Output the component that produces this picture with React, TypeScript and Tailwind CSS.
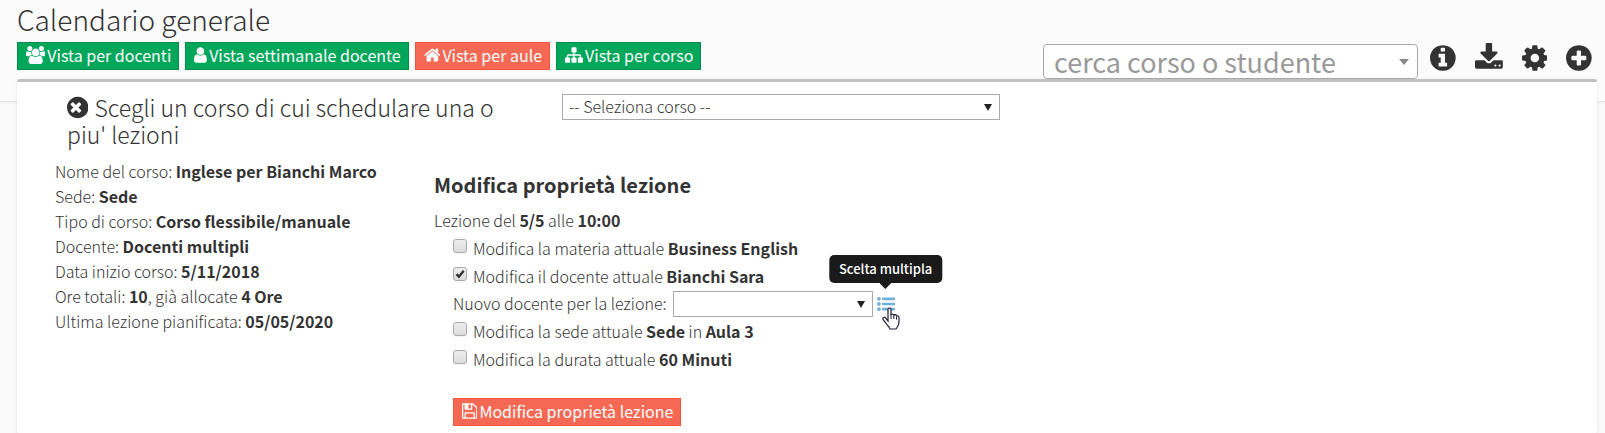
import { useState } from "react"
import type { ReactNode, SelectHTMLAttributes } from "react"
import clsx from "clsx"

const icons = {
  users: {
    box: "0 0 1920 1792",
    d: "M593 896q-162 5-265 128h-134q-82 0-138-40.5t-56-118.5q0-353 124-353 6 0 43.5 21t97.5 42.5 119 21.5q67 0 133-23-5 37-5 66 0 139 81 256zm1071 637q0 120-73 189.5t-194 69.5h-874q-121 0-194-69.5t-73-189.5q0-53 3.5-103.5t14-109 26.5-108.5 43-97.5 62-81 85.5-53.5 111.5-20q10 0 43 21.5t73 48 107 48 135 21.5 135-21.5 107-48 73-48 43-21.5q61 0 111.5 20t85.5 53.5 62 81 43 97.5 26.5 108.5 14 109 3.5 103.5zm-1024-1277q0 106-75 181t-181 75-181-75-75-181 75-181 181-75 181 75 75 181zm704 384q0 159-112.5 271.5t-271.5 112.5-271.5-112.5-112.5-271.5 112.5-271.5 271.5-112.5 271.5 112.5 112.5 271.5zm576 225q0 78-56 118.5t-138 40.5h-134q-103-123-265-128 81-117 81-256 0-29-5-66 66 23 133 23 59 0 119-21.5t97.5-42.5 43.5-21q124 0 124 353zm-128-609q0 106-75 181t-181 75-181-75-75-181 75-181 181-75 181 75 75 181z",
  },
  user: {
    box: "256 0 1280 1792",
    d: "M1536 1399q0 109-62.5 187t-150.5 78h-854q-88 0-150.5-78t-62.5-187q0-85 8.5-160.5t31.5-152 58.5-131 94-89 134.5-34.5q131 128 313 128t313-128q76 0 134.5 34.5t94 89 58.5 131 31.5 152 8.5 160.5zm-256-887q0 159-112.5 271.5t-271.5 112.5-271.5-112.5-112.5-271.5 112.5-271.5 271.5-112.5 271.5 112.5 112.5 271.5z",
  },
  home: {
    box: "64 0 1664 1792",
    d: "M1472 992v480q0 26-19 45t-45 19h-384v-384h-256v384h-384q-26 0-45-19t-19-45v-480q0-1 .5-3t.5-3l575-474 575 474q1 2 1 6zm223-69l-62 74q-8 9-21 11h-3q-13 0-21-7l-692-577-692 577q-12 8-24 7-13-2-21-11l-62-74q-8-10-7-23.5t11-21.5l719-599q32-26 76-26t76 26l244 204v-195q0-14 9-23t23-9h192q14 0 23 9t9 23v408l219 182q10 8 11 21.5t-7 23.5z",
  },
  sitemap: {
    box: "0 0 1792 1792",
    d: "M1792 1248v320q0 40-28 68t-68 28h-320q-40 0-68-28t-28-68v-320q0-40 28-68t68-28h96v-192h-512v192h96q40 0 68 28t28 68v320q0 40-28 68t-68 28h-320q-40 0-68-28t-28-68v-320q0-40 28-68t68-28h96v-192h-512v192h96q40 0 68 28t28 68v320q0 40-28 68t-68 28h-320q-40 0-68-28t-28-68v-320q0-40 28-68t68-28h96v-192q0-52 38-90t90-38h512v-192h-96q-40 0-68-28t-28-68v-320q0-40 28-68t68-28h320q40 0 68 28t28 68v320q0 40-28 68t-68 28h-96v192h512q52 0 90 38t38 90v192h96q40 0 68 28t28 68z",
  },
  save: {
    box: "128 0 1536 1792",
    d: "M512 1536h768v-384h-768v384zm896 0h128v-896q0-14-10-38.5t-20-34.5l-281-281q-10-10-34-20t-39-10v416q0 40-28 68t-68 28h-576q-40 0-68-28t-28-68v-416h-128v1280h128v-416q0-40 28-68t68-28h832q40 0 68 28t28 68v416zm-384-928v-320q0-13-9.5-22.5t-22.5-9.5h-192q-13 0-22.5 9.5t-9.5 22.5v320q0 13 9.5 22.5t22.5 9.5h192q13 0 22.5-9.5t9.5-22.5zm640 32v928q0 40-28 68t-68 28h-1344q-40 0-68-28t-28-68v-1344q0-40 28-68t68-28h928q40 0 88 20t76 48l280 280q28 28 48 76t20 88z",
  },
  close: {
    box: "128 0 1536 1792",
    d: "M1149 1122q0-26-19-45l-181-181 181-181q19-19 19-45 0-27-19-46l-90-90q-19-19-46-19-26 0-45 19l-181 181-181-181q-19-19-45-19-27 0-46 19l-90 90q-19 19-19 46 0 26 19 45l181 181-181 181q-19 19-19 45 0 27 19 46l90 90q19 19 46 19 26 0 45-19l181-181 181 181q19 19 45 19 27 0 46-19l90-90q19-19 19-46zm515-226q0 209-103 385.5t-279.5 279.5-385.5 103-385.5-103-279.5-279.5-103-385.5 103-385.5 279.5-279.5 385.5-103 385.5 103 279.5 279.5 103 385.5z",
  },
  info: {
    box: "128 0 1536 1792",
    d: "M1152 1376v-160q0-14-9-23t-23-9h-96v-512q0-14-9-23t-23-9h-320q-14 0-23 9t-9 23v160q0 14 9 23t23 9h96v320h-96q-14 0-23 9t-9 23v160q0 14 9 23t23 9h448q14 0 23-9t9-23zm-128-896v-160q0-14-9-23t-23-9h-192q-14 0-23 9t-9 23v160q0 14 9 23t23 9h192q14 0 23-9t9-23zm640 416q0 209-103 385.5t-279.5 279.5-385.5 103-385.5-103-279.5-279.5-103-385.5 103-385.5 279.5-279.5 385.5-103 385.5 103 279.5 279.5 103 385.5z",
  },
  download: {
    box: "64 0 1664 1792",
    d: "M1344 1344q0-26-19-45t-45-19-45 19-19 45 19 45 45 19 45-19 19-45zm256 0q0-26-19-45t-45-19-45 19-19 45 19 45 45 19 45-19 19-45zm128-224v320q0 40-28 68t-68 28h-1472q-40 0-68-28t-28-68v-320q0-40 28-68t68-28h465l135 136q58 56 136 56t136-56l136-136h464q40 0 68 28t28 68zm-325-569q17 41-14 70l-448 448q-18 19-45 19t-45-19l-448-448q-31-29-14-70 17-39 59-39h256v-448q0-26 19-45t45-19h256q26 0 45 19t19 45v448h256q42 0 59 39z",
  },
  cog: {
    box: "128 0 1536 1792",
    d: "M1152 896q0-106-75-181t-181-75-181 75-75 181 75 181 181 75 181-75 75-181zm512-109v222q0 12-8 23t-20 13l-185 28q-19 54-39 91 35 50 107 138 10 12 10 25t-9 23q-27 37-99 108t-94 71q-12 0-26-9l-138-108q-44 23-91 38-16 136-29 186-7 28-36 28h-222q-14 0-24.5-8.5t-11.5-21.5l-28-184q-49-16-90-37l-141 107q-10 9-25 9-14 0-25-11-126-114-165-168-7-10-7-23 0-12 8-23 15-21 51-66.5t54-70.5q-27-50-41-99l-183-27q-13-2-21-12.5t-8-23.5v-222q0-12 8-23t19-13l186-28q14-46 39-92-40-57-107-138-10-12-10-24 0-10 9-23 26-36 98.5-107.5t94.5-71.5q13 0 26 10l138 107q44-23 91-38 16-136 29-186 7-28 36-28h222q14 0 24.5 8.5t11.5 21.5l28 184q49 16 90 37l142-107q9-9 24-9 13 0 25 10 129 119 165 170 7 8 7 22 0 12-8 23-15 21-51 66.5t-54 70.5q26 50 41 98l183 28q13 2 21 12.5t8 23.5z",
  },
  plus: {
    box: "128 0 1536 1792",
    d: "M1344 960v-128q0-26-19-45t-45-19h-256v-256q0-26-19-45t-45-19h-128q-26 0-45 19t-19 45v256h-256q-26 0-45 19t-19 45v128q0 26 19 45t45 19h256v256q0 26 19 45t45 19h128q26 0 45-19t19-45v-256h256q26 0 45-19t19-45zm320-64q0 209-103 385.5t-279.5 279.5-385.5 103-385.5-103-279.5-279.5-103-385.5 103-385.5 279.5-279.5 385.5-103 385.5 103 279.5 279.5 103 385.5z",
  },
  list: {
    box: "0 0 1792 1792",
    d: "M384 1408a192 192 0 1 1-384 0 192 192 0 1 1 384 0zm0-512a192 192 0 1 1-384 0 192 192 0 1 1 384 0zm0-512a192 192 0 1 1-384 0 192 192 0 1 1 384 0zm1408 928v192q0 32-32 32h-1216q-32 0-32-32v-192q0-32 32-32h1216q32 0 32 32zm0-512v192q0 32-32 32h-1216q-32 0-32-32v-192q0-32 32-32h1216q32 0 32 32zm0-512v192q0 32-32 32h-1216q-32 0-32-32v-192q0-32 32-32h1216q32 0 32 32z",
  },
}

type IconName = keyof typeof icons

function Icon({ name, className }: { name: IconName; className?: string }) {
  return (
    <svg viewBox={icons[name].box} fill="currentColor" className={clsx("w-auto shrink-0", className)} aria-hidden="true">
      <path d={icons[name].d} />
    </svg>
  )
}

function ActionButton({ icon, color = "green", children }: { icon: IconName; color?: "green" | "red"; children: ReactNode }) {
  return (
    <button
      className={clsx(
        "flex h-7 items-center gap-[2px] border pr-[7px] pb-[2px] pl-2 text-[16px] leading-6 font-normal whitespace-nowrap text-white",
        color === "green" ? "border-[#008d4c] bg-[#00a65a]" : "border-[#f4543c] bg-[#f56954]"
      )}
    >
      <Icon name={icon} className="h-[18px]" />
      {children}
    </button>
  )
}

function PlainSelect({ className, children, ...props }: SelectHTMLAttributes<HTMLSelectElement>) {
  return (
    <div className={clsx("relative", className)}>
      <select
        {...props}
        className="block h-[26px] w-full appearance-none border border-[#a9a9a9] bg-white px-1.5 pb-[2px] text-[16px] leading-5 font-light text-[#333]"
      >
        {children}
      </select>
      <svg viewBox="0 0 8 7" className="pointer-events-none absolute top-[10px] right-2 h-[7px] w-2 fill-[#222]">
        <path d="M0 0h8L4 7z" />
      </svg>
    </div>
  )
}

function CheckRow({ checked = false, children }: { checked?: boolean; children: ReactNode }) {
  const [on, setOn] = useState(checked)
  return (
    <label className="flex h-7 items-center gap-1.5">
      <span className="relative mb-[5px] block h-[14px] w-[14px]">
        <input
          type="checkbox"
          checked={on}
          onChange={() => setOn(!on)}
          className="block h-[14px] w-[14px] appearance-none rounded-[3px] border border-[#aaa] bg-linear-to-b from-[#eee] to-[#dcdcdc] shadow-xs"
        />
        {on && (
          <svg viewBox="0 0 14 14" className="pointer-events-none absolute inset-0 h-[14px] w-[14px]">
            <path d="M3.500 7.200l2.400 2.500 4.800-6" fill="none" stroke="#333" strokeWidth="2.400" />
          </svg>
        )}
      </span>
      <span>{children}</span>
    </label>
  )
}

const details: [string, string][] = [
  ["Nome del corso", "Inglese per Bianchi Marco"],
  ["Sede", "Sede"],
  ["Tipo di corso", "Corso flessibile/manuale"],
  ["Docente", "Docenti multipli"],
  ["Data inizio corso", "5/11/2018"],
]

const tools: { icon: IconName; label: string }[] = [
  { icon: "info", label: "Informazioni" },
  { icon: "download", label: "Scarica" },
  { icon: "cog", label: "Impostazioni" },
  { icon: "plus", label: "Aggiungi" },
]

export default function App() {
  return (
    <div className="min-h-screen bg-[#f9f9f9] font-['Noto_Sans_CJK_SC','Source_Sans_Pro',sans-serif] text-[16px] leading-[25px] font-light text-[#333] [&_b]:font-bold">
      <header className="flex items-end justify-between border-b border-[#e4e4e4] bg-[#fbfbfb] pr-[13px] pb-[22px] pl-[17px] shadow-xs">
        <div className="pb-[9px]">
          <h1 className="pt-[2px] pb-1.5 text-[28px] leading-[34px]">Calendario generale</h1>
          <div className="flex gap-1.5">
            <ActionButton icon="users">Vista per docenti</ActionButton>
            <ActionButton icon="user">Vista settimanale docente</ActionButton>
            <ActionButton icon="home" color="red">Vista per aule</ActionButton>
            <ActionButton icon="sitemap">Vista per corso</ActionButton>
          </div>
        </div>
        <div className="flex items-end gap-3">
          <div className="relative w-[375px]">
            <select
              aria-label="cerca corso o studente"
              className="block h-[35px] w-full appearance-none rounded-[4px] border border-[#aaa] bg-white px-2.5 text-[27px] leading-8 font-normal text-[#999]"
            >
              <option>cerca corso o studente</option>
            </select>
            <svg viewBox="0 0 10 6" className="pointer-events-none absolute top-[15px] right-[9px] h-[6px] w-[10px] fill-[#888]">
              <path d="M0 0h10L5 6z" />
            </svg>
          </div>
          <div className="flex items-center gap-[19px] pb-[6px]">
            {tools.map((tool) => (
              <button key={tool.icon} aria-label={tool.label}>
                <Icon name={tool.icon} className="h-[30px]" />
              </button>
            ))}
          </div>
        </div>
      </header>

      <main className="relative mr-2 -mt-[23px] ml-[17px] min-h-[354px] rounded-[3px] border-t-[3px] border-[#c1c1c1] bg-white pb-2 shadow-sm">
        <div className="flex items-start pt-3 pl-[50px]">
          <h2 className="w-[445px] text-[23px] leading-[27px]">
            <button className="mr-1.5 inline-block align-[-3px]" aria-label="Chiudi">
              <Icon name="close" className="h-[25px]" />
            </button>
            Scegli un corso di cui schedulare una o piu' lezioni
          </h2>
          <PlainSelect className="ml-[50px] w-[438px]" aria-label="Corso">
            <option>-- Seleziona corso --</option>
          </PlainSelect>
        </div>

        <div className="flex items-start pt-[3px] pl-[38px]">
          <section className="w-[379px] pt-2">
            {details.map(([label, value]) => (
              <p key={label}>
                {label}: <b>{value}</b>
              </p>
            ))}
            <p>
              Ore totali: <b>10</b>, già allocate <b>4 Ore</b>
            </p>
            <p>
              Ultima lezione pianificata: <b>05/05/2020</b>
            </p>
          </section>

          <section className="pt-5">
            <h3 className="text-[20px] leading-7 font-bold">Modifica proprietà lezione</h3>
            <p className="pt-[9px]">
              Lezione del <b>5/5</b> alle <b>10:00</b>
            </p>
            <div className="pt-px pl-[19px]">
              <CheckRow>
                Modifica la materia attuale <b>Business English</b>
              </CheckRow>
              <CheckRow checked>
                Modifica il docente attuale <b>Bianchi Sara</b>
              </CheckRow>
              <div className="flex h-[27px] items-center">
                <label htmlFor="teacher">Nuovo docente per la lezione:</label>
                <PlainSelect id="teacher" className="mr-1 ml-1.5 w-[200px]">
                  <option></option>
                </PlainSelect>
                <button className="relative text-[#71b0d8]" aria-label="Scelta multipla">
                  <Icon name="list" className="h-[18px]" />
                  <span
                    role="tooltip"
                    className="absolute bottom-[30px] left-1/2 -translate-x-1/2 rounded-[5px] bg-[#1a1a1a] px-2.5 py-1 text-[13px] leading-5 font-medium whitespace-nowrap text-white"
                  >
                    Scelta multipla
                    <svg viewBox="0 0 12 6" className="absolute top-full left-1/2 h-[6px] w-3 -translate-x-1/2 fill-[#1a1a1a]">
                      <path d="M0 0h12L6 6z" />
                    </svg>
                  </span>
                  <svg viewBox="0 0 18 23" className="absolute top-3 left-[5px] h-[23px] w-[18px]" aria-hidden="true">
                    <path
                      d="M6 14V2.500q0-1.500 1.500-1.500T9 2.500V8q0-1 1.300-1T11.800 8.500q.2-.9 1.400-.8t1.300 1.600q.3-.7 1.300-.5T17 10.500V15q0 3-2 5.500l-1 1.500H8l-1-2Q5 18 3.500 15.500L1 12.500q-.6-1.600.8-2T4 11.300z"
                      fill="white"
                      stroke="#1d1a33"
                      strokeWidth="1.200"
                    />
                    <path d="M9 7v5M11.800 8.500v3.500M14.500 9.500v3" stroke="#1d1a33" fill="none" />
                  </svg>
                </button>
              </div>
              <CheckRow>
                Modifica la sede attuale <b>Sede</b> in <b>Aula 3</b>
              </CheckRow>
              <CheckRow>
                Modifica la durata attuale <b>60 Minuti</b>
              </CheckRow>
              <div className="flex pt-[25px]">
                <ActionButton icon="save" color="red">Modifica proprietà lezione</ActionButton>
              </div>
            </div>
          </section>
        </div>
      </main>
    </div>
  )
}
